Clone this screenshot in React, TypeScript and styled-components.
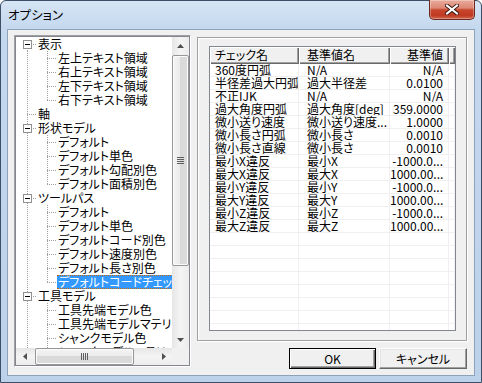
import * as React from "react";
import styled, { createGlobalStyle } from "styled-components";

const GlobalStyle = createGlobalStyle`
  html, body { margin: 0; padding: 0; background: #ffffff; }
  body {
    font-family: "Noto Sans CJK JP", "Noto Sans", sans-serif;
    font-size: 12px;
    font-feature-settings: "palt";
    color: #000;
  }
  * { box-sizing: border-box; }
`;

const Window = styled.div`
  width: 482px;
  height: 383px;
  display: flex;
  flex-direction: column;
  padding: 0 6px 6px 6px;
  border: 1px solid #3d4f66;
  border-radius: 6px 6px 0 0;
  background: linear-gradient(180deg, #d6e5f5 0%, #c4d8ee 28px, #bcd2ea 100%);
`;

const TitleBar = styled.div`
  height: 28px;
  flex: none;
  display: flex;
  justify-content: space-between;
  align-items: flex-start;
  padding-left: 1px;
`;

const Title = styled.div`
  margin-top: 6px;
  font-size: 12.5px;
  line-height: 16px;
  color: #000;
`;

const CloseButton = styled.div`
  width: 46px;
  height: 20px;
  margin-top: -1px;
  border: 1px solid #6a2a1f;
  border-top: none;
  border-radius: 0 0 5px 5px;
  background: linear-gradient(180deg, #e9ab9c 0%, #dc8974 42%, #c8462d 52%, #bf3a21 80%, #d0654a 100%);
  box-shadow: inset 0 0 0 1px rgba(255, 255, 255, 0.3);
  display: flex;
  align-items: center;
  justify-content: center;
`;

const Client = styled.div`
  flex: 1;
  display: flex;
  min-height: 0;
  padding: 5px 0 0 6px;
  border: 1px solid #8ea2b9;
  background: #f0f0f0;
`;

const LeftFrame = styled.div`
  width: 177px;
  height: 332px;
  flex: none;
  border: 1px solid;
  border-color: #a0a0a0 #ffffff #ffffff #a0a0a0;
  display: flex;
`;

const Tree = styled.div`
  flex: 1;
  min-width: 0;
  display: flex;
  flex-direction: column;
  border: 1px solid #828790;
  background: #ffffff;
`;

const TreeBody = styled.div`
  flex: 1;
  display: flex;
  min-height: 0;
`;

const TreeContent = styled.div`
  flex: 1;
  min-width: 0;
  overflow: hidden;
`;

const TreeRow = styled.div`
  height: 14px;
  display: flex;
  align-items: center;
  white-space: nowrap;
`;

const Indent = styled.div`
  position: relative;
  width: 20px;
  height: 14px;
  flex: none;
`;

const VLine = styled.span<{ $top: number; $bottom: number }>`
  position: absolute;
  left: 11px;
  width: 1px;
  top: ${(p) => p.$top}px;
  bottom: ${(p) => p.$bottom}px;
  background: repeating-linear-gradient(180deg, #a0a0a0 0 1px, transparent 1px 2px);
`;

const HLine = styled.span`
  position: absolute;
  left: 11px;
  top: 7px;
  width: 9px;
  height: 1px;
  background: repeating-linear-gradient(90deg, #a0a0a0 0 1px, transparent 1px 2px);
`;

const Expander = styled.span`
  position: absolute;
  left: 7px;
  top: 3px;
  width: 9px;
  height: 9px;
  border: 1px solid #919191;
  background: #ffffff;
  &::after {
    content: "";
    position: absolute;
    left: 1px;
    top: 3px;
    width: 5px;
    height: 1px;
    background: #000;
  }
`;

const TreeLabel = styled.span<{ $selected?: boolean }>`
  flex: none;
  margin-left: 1px;
  padding: 0 2px 0 1px;
  height: 14px;
  line-height: 12px;
  font-size: 12px;
  color: ${(p) => (p.$selected ? "#ffffff" : "#000000")};
  background: ${(p) => (p.$selected ? "#3399ff" : "transparent")};
  border-top: 1px dotted ${(p) => (p.$selected ? "#cc6600" : "transparent")};
  border-bottom: 1px dotted ${(p) => (p.$selected ? "#cc6600" : "transparent")};
`;

const VScroll = styled.div`
  width: 17px;
  flex: none;
  display: flex;
  flex-direction: column;
  background: linear-gradient(90deg, #e6e6e6, #f4f4f4 50%, #ececec);
`;

const HScrollRow = styled.div`
  height: 17px;
  flex: none;
  display: flex;
`;

const HScroll = styled.div`
  flex: 1;
  min-width: 0;
  display: flex;
  background: linear-gradient(180deg, #e6e6e6, #f4f4f4 50%, #ececec);
`;

const Corner = styled.div`
  width: 17px;
  flex: none;
  background: #f0f0f0;
`;

const ArrowButton = styled.div`
  width: 17px;
  height: 17px;
  flex: none;
  display: flex;
  align-items: center;
  justify-content: center;
`;

const Track = styled.div<{ $horizontal?: boolean }>`
  flex: 1;
  min-width: 0;
  min-height: 0;
  display: flex;
  flex-direction: ${(p) => (p.$horizontal ? "row" : "column")};
  padding: ${(p) => (p.$horizontal ? "0 1px" : "1px 0")};
`;

const Thumb = styled.div<{ $horizontal?: boolean; $offset: number; $size: number }>`
  flex: none;
  ${(p) =>
    p.$horizontal
      ? `width: ${p.$size}px; margin-left: ${p.$offset}px; height: 17px;`
      : `height: ${p.$size}px; margin-top: ${p.$offset}px; width: 17px;`}
  border: 1px solid #979797;
  border-radius: 2px;
  background: linear-gradient(
    ${(p) => (p.$horizontal ? "180deg" : "90deg")},
    #f5f5f5 0%,
    #ebebeb 45%,
    #d9d9d9 50%,
    #dcdcdc 100%
  );
  box-shadow: inset 0 0 0 1px #fbfbfb;
  display: flex;
  align-items: center;
  justify-content: center;
`;

const RightColumn = styled.div`
  width: 271px;
  flex: none;
  margin-left: 6px;
  display: flex;
  flex-direction: column;
`;

const RightFrame = styled.div`
  width: 270px;
  height: 304px;
  margin-top: 2px;
  padding: 8px 10px 9px 11px;
  border: 1px solid #a0a0a0;
  box-shadow: inset 1px 1px 0 #ffffff, 1px 1px 0 #ffffff;
  display: flex;
`;

const List = styled.div`
  flex: 1;
  min-width: 0;
  border: 1px solid #828790;
  background: #ffffff;
  overflow: hidden;
`;

const HeaderRow = styled.div`
  height: 17px;
  display: flex;
`;

const HeaderCell = styled.div<{ $w?: number; $right?: boolean; $pad?: number }>`
  ${(p) => (p.$w ? `width: ${p.$w}px; flex: none;` : "flex: 1; min-width: 0;")}
  height: 17px;
  padding: ${(p) => (p.$right ? "0 6px 0 0" : `0 0 0 ${p.$pad ?? 5}px`)};
  text-align: ${(p) => (p.$right ? "right" : "left")};
  line-height: 16px;
  font-size: 12px;
  white-space: nowrap;
  overflow: hidden;
  background: #f0f0f0;
  box-shadow: inset 1px 1px 0 #ffffff, inset -1px -1px 0 #696969, inset -2px -2px 0 #a0a0a0;
`;

const DataRow = styled.div`
  height: 13px;
  display: flex;
`;

const Cell = styled.div<{ $w?: number; $right?: boolean; $pad: number }>`
  ${(p) => (p.$w ? `width: ${p.$w}px; flex: none;` : "flex: 1; min-width: 0;")}
  height: 13px;
  padding: ${(p) => (p.$right ? `0 ${p.$pad}px 0 0` : `0 0 0 ${p.$pad}px`)};
  text-align: ${(p) => (p.$right ? "right" : "left")};
  line-height: 12px;
  font-size: 12px;
  white-space: nowrap;
  overflow: hidden;
  border-right: 1px solid #f0f0f0;
  border-bottom: 1px solid #f0f0f0;
`;

const ButtonRow = styled.div`
  margin-top: 7px;
  display: flex;
  justify-content: flex-end;
  gap: 3px;
  padding-right: 1px;
`;

const Button = styled.div<{ $default?: boolean; $w: number }>`
  width: ${(p) => p.$w}px;
  height: 21px;
  display: flex;
  align-items: center;
  justify-content: center;
  font-size: 12px;
  background: #f0f0f0;
  border: 1px solid;
  border-color: ${(p) => (p.$default ? "#000 #000 #000 #000" : "#ffffff #696969 #696969 #ffffff")};
  box-shadow: ${(p) =>
    p.$default
      ? "inset 1px 1px 0 #ffffff, inset -1px -1px 0 #696969, inset -2px -2px 0 #a0a0a0"
      : "inset -1px -1px 0 #a0a0a0, inset 1px 1px 0 #e3e3e3"};
`;

type TreeItem = {
  label: string;
  level: number;
  expanded?: boolean;
  first?: boolean;
  last?: boolean;
  selected?: boolean;
};

const treeItems: TreeItem[] = [
  { label: "表示", level: 0, expanded: true, first: true },
  { label: "左上テキスト領域", level: 1 },
  { label: "右上テキスト領域", level: 1 },
  { label: "左下テキスト領域", level: 1 },
  { label: "右下テキスト領域", level: 1, last: true },
  { label: "軸", level: 0 },
  { label: "形状モデル", level: 0, expanded: true },
  { label: "デフォルト", level: 1 },
  { label: "デフォルト単色", level: 1 },
  { label: "デフォルト勾配別色", level: 1 },
  { label: "デフォルト面積別色", level: 1, last: true },
  { label: "ツールパス", level: 0, expanded: true },
  { label: "デフォルト", level: 1 },
  { label: "デフォルト単色", level: 1 },
  { label: "デフォルトコード別色", level: 1 },
  { label: "デフォルト速度別色", level: 1 },
  { label: "デフォルト長さ別色", level: 1 },
  { label: "デフォルトコードチェック", level: 1, last: true, selected: true },
  { label: "工具モデル", level: 0, expanded: true },
  { label: "工具先端モデル色", level: 1 },
  { label: "工具先端モデルマテリアル", level: 1 },
  { label: "シャンクモデル色", level: 1 },
  { label: "シャンクモデルマテリアル", level: 1 },
];

const checks: [string, string, string][] = [
  ["360度円弧", "N/A", "N/A"],
  ["半径差過大円弧", "過大半径差", "0.0100"],
  ["不正IJK", "N/A", "N/A"],
  ["過大角度円弧", "過大角度[deg]", "359.0000"],
  ["微小送り速度", "微小送り速度...", "1.0000"],
  ["微小長さ円弧", "微小長さ", "0.0010"],
  ["微小長さ直線", "微小長さ", "0.0010"],
  ["最小X違反", "最小X", "-1000.0..."],
  ["最大X違反", "最大X", "1000.00..."],
  ["最小Y違反", "最小Y", "-1000.0..."],
  ["最大Y違反", "最大Y", "1000.00..."],
  ["最小Z違反", "最小Z", "-1000.0..."],
  ["最大Z違反", "最大Z", "1000.00..."],
];

const COLS = [89, 91, 59];
const TOTAL_ROWS = 21;

const Arrow: React.FC<{ dir: "up" | "down" | "left" | "right" }> = ({ dir }) => {
  const pts = {
    up: "0,4 3.5,0 7,4",
    down: "0,0 3.5,4 7,0",
    left: "4,0 0,3.5 4,7",
    right: "0,0 4,3.5 0,7",
  }[dir];
  const vertical = dir === "up" || dir === "down";
  return (
    <svg width={vertical ? 7 : 4} height={vertical ? 4 : 7}>
      <polygon points={pts} fill="#505050" />
    </svg>
  );
};

const Grip: React.FC<{ horizontal?: boolean }> = ({ horizontal }) =>
  horizontal ? (
    <svg width="7" height="7">
      {[0, 2, 4, 6].map((x) => (
        <rect key={x} x={x} y={0} width={1} height={7} fill="#5e5e5e" />
      ))}
    </svg>
  ) : (
    <svg width="7" height="7">
      {[0, 2, 4, 6].map((y) => (
        <rect key={y} x={0} y={y} width={7} height={1} fill="#5e5e5e" />
      ))}
    </svg>
  );

const TreeNodeRow: React.FC<{ item: TreeItem }> = ({ item }) => {
  return (
    <TreeRow>
      {item.level === 1 && (
        <Indent>
          <VLine $top={0} $bottom={0} />
        </Indent>
      )}
      <Indent>
        <VLine $top={item.first ? 7 : 0} $bottom={item.last ? 7 : 0} />
        <HLine />
        {item.expanded && <Expander />}
      </Indent>
      <TreeLabel $selected={item.selected}>{item.label}</TreeLabel>
    </TreeRow>
  );
};

export default function App() {
  return (
    <>
      <GlobalStyle />
      <Window>
        <TitleBar>
          <Title>オプション</Title>
          <CloseButton>
            <svg width="14" height="11" viewBox="0 0 14 11">
              <path d="M2 1.5 L12 9.5 M12 1.5 L2 9.5" stroke="#3a1a14" strokeWidth="4" strokeLinecap="square" />
              <path d="M2 1.5 L12 9.5 M12 1.5 L2 9.5" stroke="#ffffff" strokeWidth="2" strokeLinecap="square" />
            </svg>
          </CloseButton>
        </TitleBar>
        <Client>
          <LeftFrame>
            <Tree>
              <TreeBody>
                <TreeContent>
                  {treeItems.map((item, i) => (
                    <TreeNodeRow key={i} item={item} />
                  ))}
                </TreeContent>
                <VScroll>
                  <ArrowButton>
                    <Arrow dir="up" />
                  </ArrowButton>
                  <Track>
                    <Thumb $offset={0} $size={211}>
                      <Grip />
                    </Thumb>
                  </Track>
                  <ArrowButton>
                    <Arrow dir="down" />
                  </ArrowButton>
                </VScroll>
              </TreeBody>
              <HScrollRow>
                <HScroll>
                  <ArrowButton>
                    <Arrow dir="left" />
                  </ArrowButton>
                  <Track $horizontal>
                    <Thumb $horizontal $offset={1} $size={99}>
                      <Grip horizontal />
                    </Thumb>
                  </Track>
                  <ArrowButton>
                    <Arrow dir="right" />
                  </ArrowButton>
                </HScroll>
                <Corner />
              </HScrollRow>
            </Tree>
          </LeftFrame>
          <RightColumn>
            <RightFrame>
              <List>
                <HeaderRow>
                  <HeaderCell $w={COLS[0]}>チェック名</HeaderCell>
                  <HeaderCell $w={COLS[1]} $pad={8}>
                    基準値名
                  </HeaderCell>
                  <HeaderCell $w={COLS[2]} $right>
                    基準値
                  </HeaderCell>
                  <HeaderCell />
                </HeaderRow>
                {Array.from({ length: TOTAL_ROWS }).map((_, i) => {
                  const row = checks[i];
                  return (
                    <DataRow key={i}>
                      <Cell $w={COLS[0]} $pad={5}>
                        {row ? row[0] : ""}
                      </Cell>
                      <Cell $w={COLS[1]} $pad={8}>
                        {row ? row[1] : ""}
                      </Cell>
                      <Cell $w={COLS[2]} $right $pad={5}>
                        {row ? row[2] : ""}
                      </Cell>
                      <Cell $pad={0} />
                    </DataRow>
                  );
                })}
              </List>
            </RightFrame>
            <ButtonRow>
              <Button $default $w={87}>
                OK
              </Button>
              <Button $w={88}>キャンセル</Button>
            </ButtonRow>
          </RightColumn>
        </Client>
      </Window>
    </>
  );
}
